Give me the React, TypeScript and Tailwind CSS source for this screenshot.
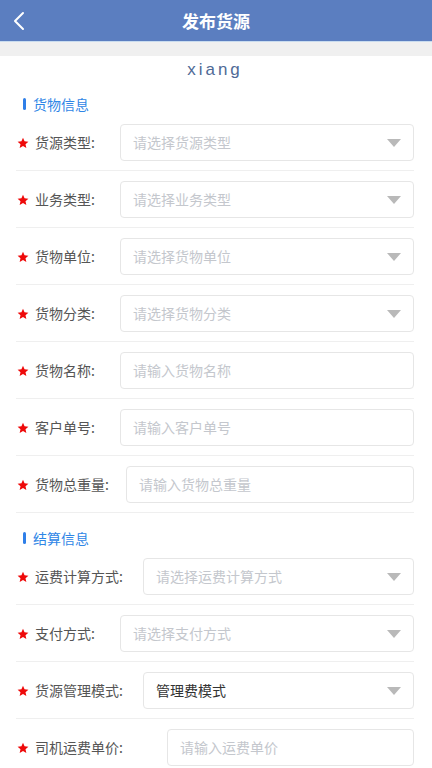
import React from "react";

type Row = { label: string; placeholder?: string; value?: string; select: boolean; lw: number };

const sec1: Row[] = [
  { label: "货源类型", placeholder: "请选择货源类型", select: true, lw: 104 },
  { label: "业务类型", placeholder: "请选择业务类型", select: true, lw: 104 },
  { label: "货物单位", placeholder: "请选择货物单位", select: true, lw: 104 },
  { label: "货物分类", placeholder: "请选择货物分类", select: true, lw: 104 },
  { label: "货物名称", placeholder: "请输入货物名称", select: false, lw: 104 },
  { label: "客户单号", placeholder: "请输入客户单号", select: false, lw: 104 },
  { label: "货物总重量", placeholder: "请输入货物总重量", select: false, lw: 110 },
];

const sec2: Row[] = [
  { label: "运费计算方式", placeholder: "请选择运费计算方式", select: true, lw: 127 },
  { label: "支付方式", placeholder: "请选择支付方式", select: true, lw: 104 },
  { label: "货源管理模式", value: "管理费模式", select: true, lw: 127 },
  { label: "司机运费单价", placeholder: "请输入运费单价", select: false, lw: 151 },
];

function FormRow({ r }: { r: Row }) {
  return (
    <div className="flex items-center pt-[10px] pb-[9px] border-b border-[#efefef]">
      <div className="flex items-center shrink-0" style={{ width: r.lw }}>
        <svg width="12" height="12" viewBox="0 0 24 24" className="ml-[1px] mr-[6px]">
          <path d="M12 1.5l3.1 7.1 7.7.7-5.8 5.1 1.7 7.6L12 18l-6.7 4 1.7-7.6L1.2 9.3l7.7-.7z" fill="#ee0a0a" />
        </svg>
        <span className="text-[14px] text-[#555555]">{r.label}:</span>
      </div>
      <div className="flex-1 h-[37px] border border-[#e6e6e6] rounded-[4px] flex items-center pl-3 pr-[12px]">
        <span className={"flex-1 text-[14px] " + (r.value ? "text-[#333333]" : "text-[#c4c7cd]")}>
          {r.value ?? r.placeholder}
        </span>
        {r.select && (
          <svg width="14" height="8" viewBox="0 0 14 8">
            <path d="M0 0h14L7 8z" fill="#b9b9b9" />
          </svg>
        )}
      </div>
    </div>
  );
}

function SectionTitle({ t, cls }: { t: string; cls: string }) {
  return (
    <div className={"flex items-center h-5 pl-[7px] " + cls}>
      <div className="w-[3px] h-[12px] rounded-sm bg-[#2f7fe8] mr-[7px]" />
      <span className="text-[14px] text-[#2f86e6]">{t}</span>
    </div>
  );
}

export default function App() {
  return (
    <div
      className="w-[432px] h-[768px] overflow-hidden bg-white"
      style={{ fontFamily: '"Noto Sans CJK SC", "Noto Sans", sans-serif' }}
    >
      <div className="h-[42px] bg-[#5b7ec0] flex items-center justify-center relative border-b border-[#c9dcef]">
        <svg className="absolute left-[12px] top-[11px]" width="14" height="20" viewBox="0 0 14 20">
          <path d="M11 2L3 10l8 8" stroke="white" strokeWidth="2" fill="none" strokeLinecap="round" strokeLinejoin="round" />
        </svg>
        <span className="text-white text-[17px] font-bold">发布货源</span>
      </div>
      <div className="h-[14px] bg-[#f0f0f0]" />
      <div className="pl-4 pr-[18px]">
        <div
          className="h-[28px] flex items-center justify-center text-[17px] text-[#4f6a96] tracking-[3px]"
          style={{ fontFamily: '"Liberation Sans", Arial, sans-serif' }}
        >
          xiang
        </div>
        <SectionTitle t="货物信息" cls="mt-[10px]" />
        {sec1.map((r) => (
          <FormRow key={r.label} r={r} />
        ))}
        <SectionTitle t="结算信息" cls="mt-[15px]" />
        {sec2.map((r) => (
          <FormRow key={r.label} r={r} />
        ))}
      </div>
    </div>
  );
}
